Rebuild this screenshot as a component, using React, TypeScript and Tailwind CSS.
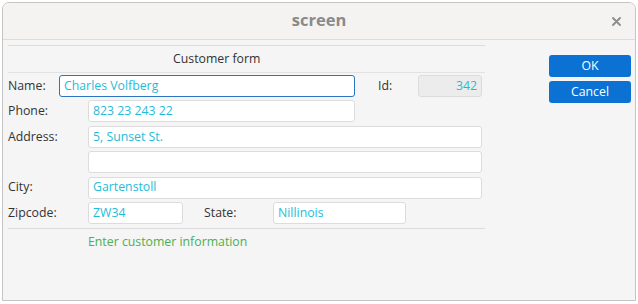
import React from "react";

const font = { fontFamily: '"Open Sans", "Noto Sans", sans-serif' };

function Field({ w, value, right, focused, gray }: { w: string; value: string; right?: boolean; focused?: boolean; gray?: boolean }) {
  return (
    <div
      className={`${w} h-[22px] rounded-[3px] border px-[4px] flex items-center text-[12.3px] text-[#1fbcd8] ${
        focused ? "border-[#2c74c4]" : "border-[#dcdcdc]"
      } ${gray ? "bg-[#ececec]" : "bg-white"} ${right ? "justify-end" : ""}`}
    >
      {value}
    </div>
  );
}

export default function App() {
  return (
    <div className="w-[638px] h-[304px] bg-white pt-[2px] pl-[2px]" style={font}>
      <div className="w-[634px] h-[299px] border border-[#c4c4c4] rounded-t-[7px] bg-[#f5f5f5] flex flex-col overflow-hidden">
        <div className="h-[37px] shrink-0 border-b border-[#dedbd8] bg-[#f4f3f2] grid grid-cols-[1fr_auto_1fr] items-center">
          <div />
          <div className="text-[16.5px] font-bold text-[#8a8a8a] leading-none pb-[2px]">screen</div>
          <div className="flex justify-end pr-[14px]">
            <svg width="9" height="9" viewBox="0 0 9 9">
              <path d="M1 1 L8 8 M8 1 L1 8" stroke="#8c8c8c" strokeWidth="1.8" strokeLinecap="round" />
            </svg>
          </div>
        </div>
        <div className="flex flex-row flex-1">
          <div className="pl-[5px] pt-[5px] w-[482px] shrink-0">
            <div className="border-t border-[#dcdcdc]" />
            <div className="h-[26px] flex items-center pl-[165px] text-[12.3px] text-[#333]">Customer form</div>
            <div className="border-t border-[#e2e2e2]" />
            <div className="flex flex-col gap-[3.4px] mt-[2px] text-[12.3px] text-[#333]">
              <div className="flex items-center">
                <div className="w-[51px]">Name:</div>
                <Field w="w-[296px]" value="Charles Volfberg" focused />
                <div className="w-[40px] ml-[23px]">Id:</div>
                <Field w="w-[64px]" value="342" right gray />
              </div>
              <div className="flex items-center">
                <div className="w-[80px]">Phone:</div>
                <Field w="w-[267px]" value="823 23 243 22" />
              </div>
              <div className="flex items-center">
                <div className="w-[80px]">Address:</div>
                <Field w="w-[394px]" value="5, Sunset St." />
              </div>
              <div className="flex items-center">
                <div className="w-[80px]"></div>
                <Field w="w-[394px]" value="" />
              </div>
              <div className="flex items-center">
                <div className="w-[80px]">City:</div>
                <Field w="w-[394px]" value="Gartenstoll" />
              </div>
              <div className="flex items-center">
                <div className="w-[80px]">Zipcode:</div>
                <Field w="w-[95px]" value="ZW34" />
                <div className="w-[69px] ml-[21px]">State:</div>
                <Field w="w-[133px]" value="Nillinois" />
              </div>
            </div>
            <div className="border-t border-[#dcdcdc] mt-[4px] w-[477px]" />
            <div className="pl-[80px] mt-[4px] text-[12.3px] text-[#4caf50] leading-[18px]">Enter customer information</div>
          </div>
          <div className="ml-[64px] mt-[15px] flex flex-col gap-[4px]">
            <button className="w-[82px] h-[22px] rounded-[3px] bg-[#0b72d4] text-white text-[12.3px] flex items-center justify-center">OK</button>
            <button className="w-[82px] h-[22px] rounded-[3px] bg-[#0b72d4] text-white text-[12.3px] flex items-center justify-center">Cancel</button>
          </div>
        </div>
      </div>
    </div>
  );
}
